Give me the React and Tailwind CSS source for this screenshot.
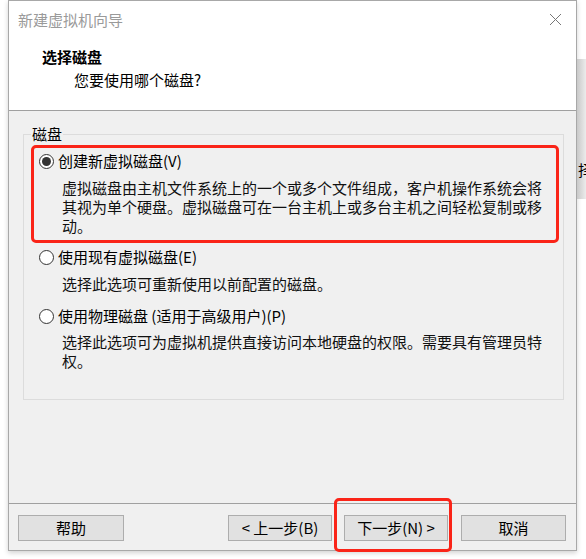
import React from 'react'

const font = { fontFamily: '"Noto Sans CJK SC", "Noto Sans", sans-serif' }

function Radio({ checked }) {
  return (
    <span className="w-[15px] h-[15px] rounded-full border border-[#333] bg-white flex items-center justify-center shrink-0">
      {checked && <span className="w-[9px] h-[9px] rounded-full bg-[#333]"></span>}
    </span>
  )
}

function Option({ checked, label, lines, gap }) {
  return (
    <div>
      <div className="flex items-center gap-[4px] h-[20px]">
        <Radio checked={checked} />
        <span className="text-[15px] leading-[20px] text-black">{label}</span>
      </div>
      <div className={`pl-[23px] ${gap} text-[15px] leading-[19px] text-[#111]`}>
        {lines.map((l) => (
          <div key={l} className="whitespace-nowrap">{l}</div>
        ))}
      </div>
    </div>
  )
}

function Button({ children, w }) {
  return (
    <button className={`${w} h-[26px] bg-[#e1e1e1] border border-[#adadad] text-[15px] leading-[20px] text-black flex items-center justify-center`}>
      {children}
    </button>
  )
}

export default function App() {
  return (
    <div className="w-[586px] h-[559px] bg-white flex overflow-hidden" style={font}>
      <div className="w-[8px] shrink-0"></div>

      <div className="w-[569px] h-[551px] shrink-0 border border-[#a8a8a8] bg-[#f0f0f0] flex flex-col shadow-[0_2px_5px_rgba(0,0,0,0.18)]">
        {/* header */}
        <div className="h-[110px] bg-white border-b border-[#a0a0a0] shrink-0">
          <div className="flex items-center justify-between mt-[9px] pl-[9px] pr-[14px] h-[20px]">
            <span className="text-[15px] leading-[20px] text-[#9a9a9a]">新建虚拟机向导</span>
            <svg width="13" height="13" viewBox="0 0 13 13" className="mt-[-1px]">
              <path d="M1 1 L12 12 M12 1 L1 12" stroke="#777" strokeWidth="1" />
            </svg>
          </div>
          <div className="mt-[17px] pl-[33px] text-[15px] leading-[20px] font-bold text-black">选择磁盘</div>
          <div className="mt-[3px] pl-[65px] text-[15px] leading-[20px] text-black">您要使用哪个磁盘?</div>
        </div>

        {/* body */}
        <fieldset className="mt-[13px] ml-[14px] mr-[12px] h-[276px] border border-[#dcdcdc] pl-[7px] pr-[4px] shrink-0">
          <legend className="px-[1px] text-[15px] leading-[20px] text-black">磁盘</legend>
          <div className="mt-[1px] border-[3px] border-[#fa2418] rounded-[5px] pl-[5px] pt-[3px] pb-[5px]">
            <Option
              checked
              label="创建新虚拟磁盘(V)"
              gap="mt-[7px]"
              lines={[
                '虚拟磁盘由主机文件系统上的一个或多个文件组成，客户机操作系统会将',
                '其视为单个硬盘。虚拟磁盘可在一台主机上或多台主机之间轻松复制或移',
                '动。',
              ]}
            />
          </div>
          <div className="mt-[4px] pl-[8px]">
            <Option
              label="使用现有虚拟磁盘(E)"
              gap="mt-[7px]"
              lines={['选择此选项可重新使用以前配置的磁盘。']}
            />
          </div>
          <div className="mt-[13px] pl-[8px]">
            <Option
              label="使用物理磁盘 (适用于高级用户)(P)"
              gap="mt-[6px]"
              lines={['选择此选项可为虚拟机提供直接访问本地硬盘的权限。需要具有管理员特', '权。']}
            />
          </div>
        </fieldset>

        <div className="flex-1"></div>

        {/* footer */}
        <div className="border-t border-[#a0a0a0] pt-[11px] pb-[9px] pl-[9px] pr-[10px] flex items-center shrink-0">
          <Button w="w-[106px]">帮助</Button>
          <div className="flex-1"></div>
          <Button w="w-[104px]">&lt; 上一步(B)</Button>
          <div className="relative ml-[12px]">
            <Button w="w-[104px]">下一步(N) &gt;</Button>
            <div className="absolute left-[-10px] right-[-4px] top-[-17px] bottom-[-11px] border-[3px] border-[#fa2418] rounded-[5px] pointer-events-none"></div>
          </div>
          <div className="ml-[13px]">
            <Button w="w-[105px]">取消</Button>
          </div>
        </div>
      </div>

      {/* window behind, peeking on the right */}
      <div className="w-[9px] shrink-0 flex flex-col">
        <div className="h-[59px]"></div>
        <div className="h-[140px] bg-gradient-to-r from-[#c9c9c9] to-[#ececec] overflow-hidden">
          <div className="mt-[101px] ml-[1px] text-[15px] leading-[20px] text-black whitespace-nowrap">择</div>
        </div>
      </div>
    </div>
  )
}
